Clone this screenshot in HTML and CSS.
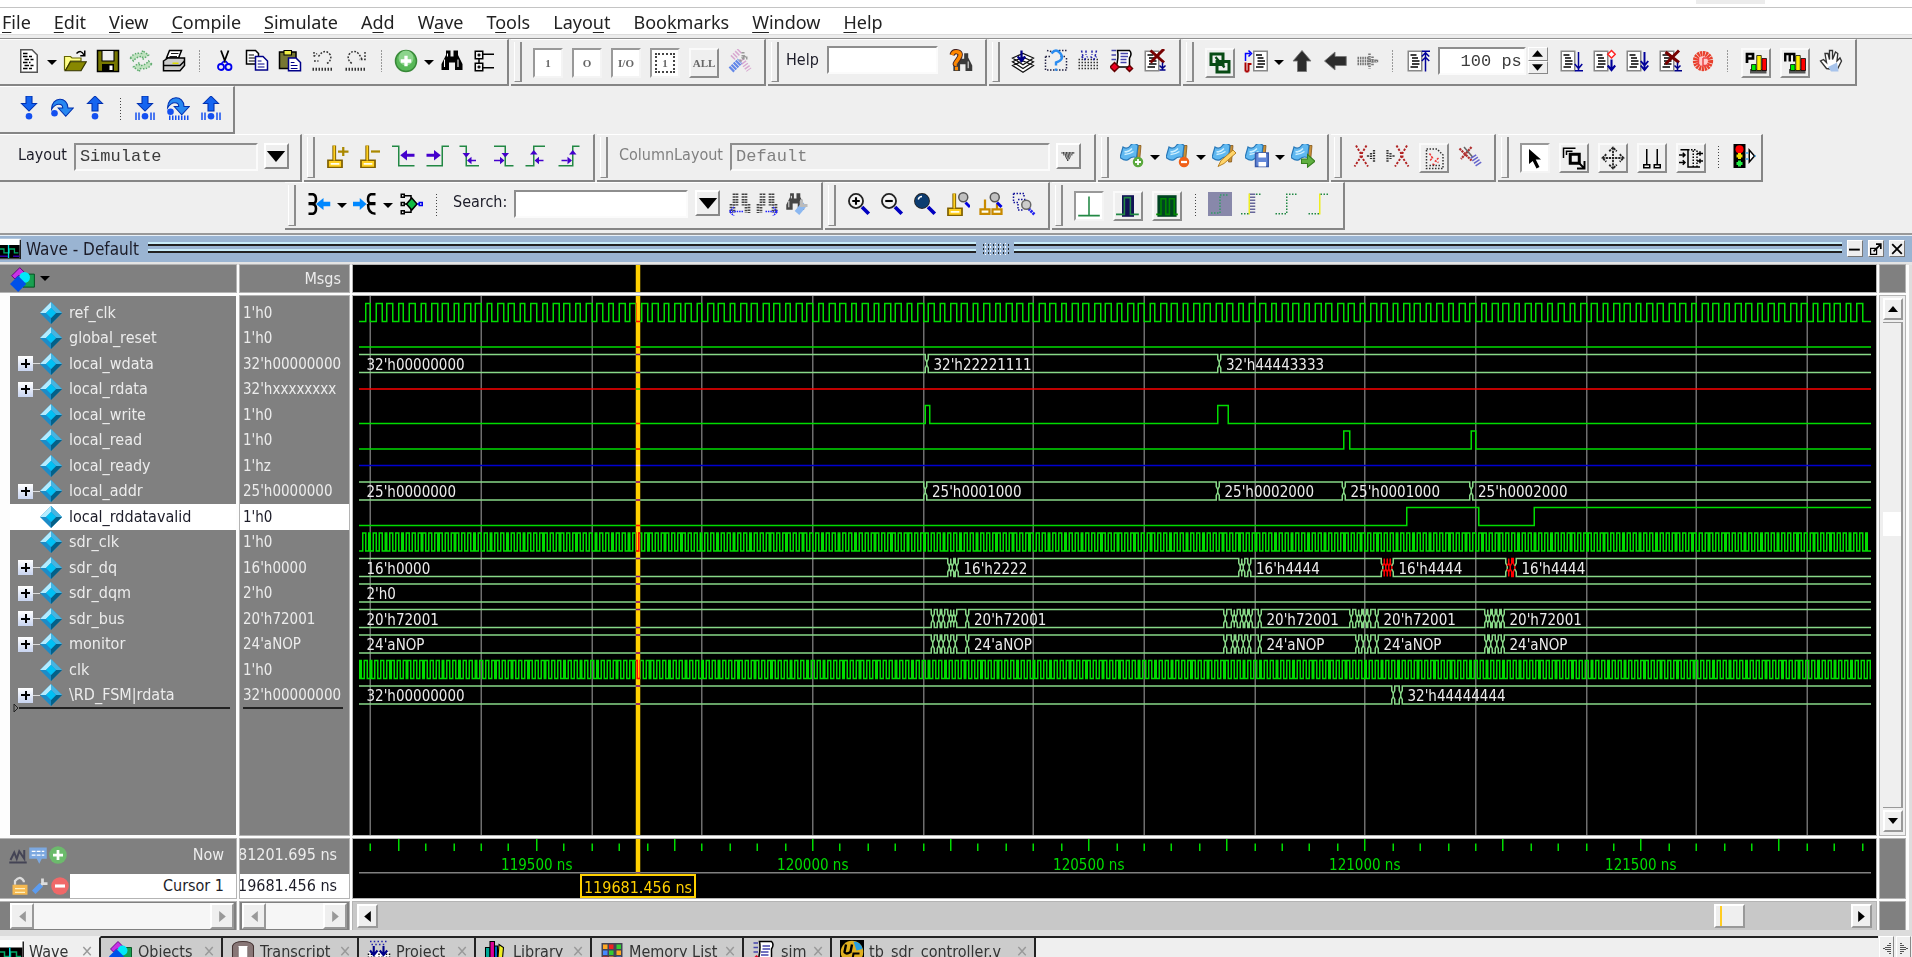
FILE: index.html
```html
<!DOCTYPE html>
<html lang="en">
<head>
<meta charset="utf-8">
<title>Wave - Default</title>
<link rel="stylesheet" href="styles.css">
</head>
<body>
<svg class="sprite" aria-hidden="true">
  <symbol id="gem" viewBox="0 0 22 22"><path d="M11 0 22 11 11 22 0 11Z" fill="#1c8cc8"/><path d="M11 0V6L6 11H0Z" fill="#b4ecff"/><path d="M11 0 22 11H16L11 6Z" fill="#46b4e0"/><path d="M22 11 11 22V16L16 11Z" fill="#046088"/><path d="M11 6 16 11 11 16 6 11Z" fill="#00c0f4"/></symbol>
  <symbol id="objs" viewBox="0 0 16 16"><path d="M1 6 6 1 9 4V6H5L3 8Z" fill="#c832e6" stroke="#600080" stroke-width=".6"/><path d="M8 5H15V13H8Z" fill="#18a050" stroke="#005020" stroke-width=".6"/><circle cx="9" cy="7" r="3.3" fill="#00e8f8"/><path d="M5 6 10 11 5 16 0 11Z" fill="#0050e8"/></symbol>
  <symbol id="wave" viewBox="0 0 16 16"><path d="M0 0H16V16H0Z" fill="#fff"/><path d="M0 5H15V15H0Z"/><path d="M0 8H3V11H7V8H11V11H14" fill="none" stroke="#0a6"/><path d="M0 13.500H6M10 13.500H15" stroke="#30a"/><path d="M6.500 5V15" stroke="#0dd"/><path d="M15.500 1V15.500H0" fill="none" stroke="#222"/></symbol>
  <symbol id="page" viewBox="0 0 16 16"><path d="M1.500 1.500H10.500V14.500H1.500Z" fill="#fff" stroke="#888"/><path d="M3 4H7M4 6H8M4 8H9M4 10H9M3 12H8" stroke="#000"/></symbol>
  <symbol id="flag" viewBox="0 0 16 16"><path d="M12 1H14L13 12H11Z" fill="#c89038" stroke="#805010" stroke-width=".5"/><path d="M2 2Q5 4 7 1T12 1L11 9Q8 8 6 10T0 9Z" fill="#60b8f0" stroke="#2878b8" stroke-width=".8"/><path d="M3 5Q5 6 8 3M3 7Q6 7 9 5" fill="none" stroke="#d0f0ff"/></symbol>
  <symbol id="bino" viewBox="0 0 16 16"><path d="M4 1H7V5H9V1H12V4L15 10V14H10V9H6V14H1V10L4 4Z"/><path d="M3 7V12M12 7V12M5 3V5" stroke="#fff" stroke-width=".7"/></symbol>
  <symbol id="binodim" viewBox="0 0 16 16"><path d="M4 1V14M6 1V9M10 1V9M12 1V14M2 8V14M14 8V14" stroke="#444" stroke-width="1.800" stroke-dasharray="1 .8"/></symbol>
  <symbol id="marker" viewBox="0 0 16 16"><path d="M5.500 1V11M2 11.500H10V15H2Z" stroke="#806000" stroke-width="2.500" fill="none"/><path d="M5.500 1V11M2.500 12H9.500V14.500H2.500Z" stroke="#ffd020" fill="#ffe" stroke-width="1.200"/></symbol>
  <symbol id="lens" viewBox="0 0 16 16"><path d="M10 10 14.500 14.500" stroke="#0000c0" stroke-width="2.500"/><circle cx="6" cy="6" r="4.700" fill="#f4f4f4" stroke="#222" stroke-width="1.200"/></symbol>
  <symbol id="mini" viewBox="0 0 16 16"><path d="M12 7 15 10" stroke="#0000e0" stroke-width="2"/><circle cx="10.500" cy="3.500" r="3" fill="#c0c0c0" stroke="#555"/></symbol>
  <symbol id="bars" viewBox="0 0 16 16"><path d="M4 12H15V15H4Z" fill="#555"/><path d="M5 9H8V13H5Z" fill="#0e0" stroke="#000" stroke-width=".5"/><path d="M8.500 3H11.500V13H8.500Z" fill="#fe0" stroke="#000" stroke-width=".5"/><path d="M12 5H15V13H12Z" fill="#f00" stroke="#000" stroke-width=".5"/></symbol>
  <symbol id="stepdn" viewBox="0 0 16 16"><path d="M6 0H10V5H13L8 10 3 5H6Z" fill="#1464f0" stroke="#0030b0" stroke-width=".7"/></symbol>
  <symbol id="stepup" viewBox="0 0 16 16"><path d="M6 10H10V5H13L8 0 3 5H6Z" fill="#1464f0" stroke="#0030b0" stroke-width=".7"/></symbol>
  <symbol id="stepov" viewBox="0 0 16 16"><path d="M1 8C1-1 12-1 12 7H15.500L10.500 12.500 5.500 7H8.500C8.500 4 4 3 1 8Z" fill="#2888f0" stroke="#0030b0" stroke-width=".7"/><circle cx="3" cy="10.500" r="2.200" fill="#1450f0"/></symbol>
</svg>

<div class="strip"></div>
<nav class="menu" aria-label="Main">
  <button><u>F</u>ile</button><button><u>E</u>dit</button><button><u>V</u>iew</button><button><u>C</u>ompile</button><button><u>S</u>imulate</button><button>A<u>d</u>d</button><button>W<u>a</u>ve</button><button>T<u>o</u>ols</button><button>Layo<u>u</u>t</button><button>Boo<u>k</u>marks</button><button><u>W</u>indow</button><button><u>H</u>elp</button>
</nav>

<div class="row">
  <div class="bar first">
    <button class="tb" aria-label="New"><svg viewBox="0 0 16 16"><path d="M2.500.500H10L13.500 4V15.500H2.500Z" fill="#fff" stroke="#555"/><path d="M4 3H8M4 5H10M5 7H11M4 9H9M5 11H11M4 13H10" stroke="#000" stroke-dasharray="3 1"/></svg></button><button class="caret" aria-label="New options"></button>
    <button class="tb" aria-label="Open"><svg viewBox="0 0 16 16"><path d="M1 5H5L6 6H12V8H5L2 14H1Z" fill="#ff8" stroke="#660" stroke-width=".8"/><path d="M5 8.500H15.500L12 14.500H1.500Z" fill="#880" stroke="#330" stroke-width=".8"/><path d="M9 3Q12 0 14 4M14.500 1V4.500H11.500" fill="none" stroke="#000"/></svg></button>
    <button class="tb" aria-label="Save"><svg viewBox="0 0 16 16"><path d="M1 1H15V15H1Z" fill="#770" stroke="#000"/><path d="M4 1H12V8H4Z" fill="#eee" stroke="#000" stroke-width=".7"/><path d="M4 10H12V15H4Z"/><path d="M9 11H11V14H9Z" fill="#fff"/></svg></button>
    <button class="tb" aria-label="Reload"><svg viewBox="0 0 16 16" class="dis"><path d="M1 6Q3 2 9 3V1L13 4 9 7V5Q5 5 3 8ZM15 10Q13 14 7 13V15L3 12 7 9V11Q11 11 13 8Z" fill="#b4e0b4" stroke="#3c9a50" stroke-dasharray="1 1"/></svg></button>
    <button class="tb" aria-label="Print"><svg viewBox="0 0 16 16"><path d="M5 1H13L11 6H3Z" fill="#fff" stroke="#000"/><path d="M6 3H11M5 5H10" stroke="#000" stroke-width=".6"/><path d="M1 8 4 6H15V11L12 14.500H1Z" fill="#ccc" stroke="#000"/><path d="M1 11H12L15 8" fill="none" stroke="#000"/><path d="M7 9.500H11" stroke="#dd0"/></svg></button>
    <span class="sep"></span>
    <button class="tb" aria-label="Cut"><svg viewBox="0 0 16 16"><path d="M6 1 9 9M11 1 8 9" stroke="#000" stroke-width="1.200"/><circle cx="6" cy="12" r="2" fill="none" stroke="#00e" stroke-width="1.200"/><circle cx="11" cy="12" r="2" fill="none" stroke="#00e" stroke-width="1.200"/><path d="M8 8 6 10M9 8 11 10" stroke="#00e"/></svg></button>
    <button class="tb" aria-label="Copy"><svg viewBox="0 0 16 16"><path d="M1 1H7L9 3V10H1Z" fill="#fff" stroke="#000"/><path d="M2.500 4H6M2.500 6H7M2.500 8H7" stroke="#000" stroke-width=".8"/><path d="M7 5H12L15 8V14H7Z" fill="#fff" stroke="#008"/><path d="M8.500 8H11M8.500 10H13M8.500 12H13" stroke="#008" stroke-width=".8"/></svg></button>
    <button class="tb" aria-label="Paste"><svg viewBox="0 0 16 16"><path d="M1 2H12V13H1Z" fill="#773" stroke="#000"/><path d="M4 1H9V4H4Z" fill="#ee4" stroke="#000" stroke-width=".7"/><path d="M7 6H12L15 9V14.500H7Z" fill="#fff" stroke="#008"/><path d="M8.500 9H11M8.500 11H13M8.500 13H13" stroke="#008" stroke-width=".8"/></svg></button>
    <button class="tb" aria-label="Undo" disabled><svg viewBox="0 0 16 16"><path d="M2 5 4 3M2 8H5M5 5Q9-1 13 4Q14 8 10 10M2 2V5" fill="none" stroke="#333" stroke-dasharray="1.200 1"/><path d="M1 13.500H15" stroke="#333" stroke-width="2" stroke-dasharray="1 1"/></svg></button>
    <button class="tb" aria-label="Redo" disabled><svg viewBox="0 0 16 16"><path d="M14 2V7H10M12 7Q8-2 3 4Q2 8 6 10" fill="none" stroke="#333" stroke-dasharray="1.200 1"/><path d="M1 13.500H15" stroke="#333" stroke-width="2" stroke-dasharray="1 1"/></svg></button>
    <span class="sep"></span>
    <button class="tb" aria-label="Add"><svg viewBox="0 0 16 16"><circle cx="8" cy="8" r="7" fill="#58b858" stroke="#388838"/><circle cx="8" cy="6" r="5" fill="#8cd48c"/><path d="M8 4.500V11.500M4.500 8H11.500" stroke="#fff" stroke-width="2.200"/></svg></button><button class="caret" aria-label="Add options"></button>
    <button class="tb" aria-label="Find"><svg viewBox="0 0 16 16"><use href="#bino"/></svg></button>
    <button class="tb" aria-label="Expand tree"><svg viewBox="0 0 16 16" fill="none" stroke="#000"><path d="M1.500 1.500H6.500V6.500H1.500ZM1.500 9.500H6.500V14.500H1.500ZM6 3.500H14M6 12.500H14M4 7V9M3 4H5M4 3V5M3 12H5M4 11V13"/></svg></button>
  </div>
  <div class="bar">
    <button class="box on" disabled>1</button><button class="box on" disabled>O</button><button class="box on" disabled>I/O</button><button class="box on" disabled><span class="dot">1</span></button><button class="box" disabled>ALL</button>
    <button class="tb" aria-label="Filter tool"><svg viewBox="0 0 16 16"><path d="M3 6 8 1M9 7 14 14" stroke="#d8a8d0" stroke-width="4" stroke-dasharray="1 1"/><path d="M2 14 8 8" stroke="#6488e8" stroke-width="4.500" stroke-dasharray="1.500 .5"/><path d="M8 8 12 4M10 2V6H14" fill="none" stroke="#999" stroke-width="2" stroke-dasharray="1 1"/></svg></button>
  </div>
  <div class="bar">
    <label class="lbl" for="help">Help</label><input id="help" class="field help">
    <button class="tb" aria-label="Search help"><svg viewBox="0 0 16 16"><use href="#bino" transform="translate(2 2) scale(.9)" opacity=".75"/><path d="M2 4Q3 1 6 2T6 7 5 10" fill="none" stroke="#422" stroke-width="3.500"/><path d="M2 4Q3 1 6 2T6 7 5 10M4 13H6" fill="none" stroke="#f80" stroke-width="2.300"/></svg></button>
  </div>
  <div class="bar">
    <button class="tb" aria-label="Compile"><svg viewBox="0 0 16 16"><path d="M1 11 8 8 15 11 8 15.500Z M1 8.500 8 5.500 15 8.500 8 13Z M1 6 8 3 15 6 8 10.500Z" fill="#fff" stroke="#111" stroke-width=".8"/><path d="M7 1V7M4.500 5 7 8 9.500 5" fill="none" stroke="#008" stroke-width="1.500"/></svg></button>
    <button class="tb" aria-label="Compile out of date" disabled><svg viewBox="0 0 16 16" fill="none"><path d="M1 5V14H15V5M2 1 6 2M10 1H15M1 5H5M11 5H15" stroke="#224" stroke-dasharray="1 1"/><path d="M5 3Q8-1 11 3T8 9V11M8 13V14.500" stroke="#2a8cf0" stroke-width="1.600"/></svg></button>
    <button class="tb" aria-label="Compile all" disabled><svg viewBox="0 0 16 16"><path d="M1 9H15M1 11H15M1 13H15M1 7H15" stroke="#333" stroke-dasharray="1 1"/><path d="M3 1 4 5M6 1V4M10 1V4M13 1 12 5M3 5 5 7 7 5M9 5 11 7 13 5" fill="none" stroke="#22a" stroke-dasharray="1.500 1"/></svg></button>
    <button class="tb" aria-label="Simulate"><svg viewBox="0 0 16 16"><path d="M5 1H13Q15 3 13 6V12H4Q6 6 5 1Z" fill="#fff" stroke="#000"/><path d="M7 3H12M7 5H12M7 7H11M7 9H11M1 1H4M1 4H4M1 7H4" stroke="#44a"/><path d="M3 9 6 12 3 15 0 12ZM13 11 15 13 13 15 11 13Z" fill="#e02" stroke="#600"/></svg></button>
    <button class="tb" aria-label="Break"><svg viewBox="0 0 16 16"><use href="#page"/><path d="M5 1 14 9M14 0 5 9" stroke="#700" stroke-width="2"/><path d="M13 9V14M11 14H15M11 11 13 13 15 11" fill="none" stroke="#008"/></svg></button>
  </div>
  <div class="bar">
    <button class="box" aria-label="Environment"><svg viewBox="0 0 16 16"><path d="M2 2H10V9H2ZM6 7H14V14H6Z" fill="none" stroke="#074a14" stroke-width="2"/><path d="M5 4 11 11" stroke="#074a14" stroke-width="1.500"/></svg></button>
    <button class="tb" aria-label="Restart options"><svg viewBox="0 0 16 16"><use href="#page" x="5"/><path d="M1 8V3H4M3 1 5 3 3 5" fill="none" stroke="#00f"/><path d="M1 15V9M1 15H3M3 15V10H5" fill="none" stroke="#a00" stroke-width="1.300"/></svg></button><button class="caret" aria-label="More"></button>
    <button class="tb" aria-label="Up"><svg viewBox="0 0 16 16"><path d="M8 1 14 8H11V15H5V8H2Z" fill="#2c2c2c" stroke="#777" stroke-width=".6"/></svg></button>
    <button class="tb" aria-label="Back"><svg viewBox="0 0 16 16"><path d="M1 8 8 2V5H15.500V11H8V14Z" fill="#2c2c2c" stroke="#777" stroke-width=".6"/></svg></button>
    <button class="tb" aria-label="Forward" disabled><svg viewBox="0 0 16 16"><path d="M1 6H9M1 8H15M1 10H9M9 3V13M11 5V11M13 7V9" stroke="#777" stroke-width="1.700" stroke-dasharray="1 .6"/></svg></button>
    <span class="sep"></span>
    <button class="tb" aria-label="Restart"><svg viewBox="0 0 16 16"><use href="#page"/><path d="M13 15V2M10.500 1.500H16M10.500 5 13 2.500 15.500 5M10.500 8 13 5.500 15.500 8" fill="none" stroke="#009"/></svg></button>
    <input class="field run" aria-label="Run length" value="100 ps"><span class="spin"><button aria-label="Increase"><svg viewBox="0 0 10 6"><path d="M5 0 10 6H0Z"/></svg></button><button aria-label="Decrease"><svg viewBox="0 0 10 6"><path d="M5 6 10 0H0Z"/></svg></button></span>
    <button class="tb" aria-label="Run"><svg viewBox="0 0 16 16"><use href="#page"/><path d="M13 2V14M10.500 14.500H16M10.500 10 13 13 15.500 10" fill="none" stroke="#009"/></svg></button>
    <button class="tb" aria-label="Continue run"><svg viewBox="0 0 16 16"><use href="#page"/><path d="M13 7V14M10.500 11 13 14 15.500 11" fill="none" stroke="#009" stroke-width="1.400"/><path d="M13 1 15.500 3.500 13 6 10.500 3.500Z" fill="#fff" stroke="#f22"/></svg></button>
    <button class="tb" aria-label="Run all"><svg viewBox="0 0 16 16"><use href="#page"/><path d="M13 2V14M10.500 8 13 11 15.500 8M10.500 11 13 14 15.500 11" fill="none" stroke="#009" stroke-width="1.300"/></svg></button>
    <button class="tb" aria-label="Stop simulation"><svg viewBox="0 0 16 16"><use href="#page"/><path d="M5 2 14 9M14 1 5 10" stroke="#700" stroke-width="2"/><path d="M13 9V14M11 14.500H16M11 11 13 13 15 11" fill="none" stroke="#008"/></svg></button>
    <button class="tb" aria-label="Stop" disabled><svg viewBox="0 0 16 16"><circle cx="8" cy="8" r="5" fill="#fcc" stroke="#e8402c" stroke-width="3.500" stroke-dasharray="1.400 .4"/><path d="M5 6V11M8 6H12M8 6V11H12" stroke="#e44" fill="none"/></svg></button>
    <span class="sep"></span>
    <button class="box" aria-label="Performance profiling"><svg viewBox="0 0 16 16"><use href="#bars"/><path d="M2 8V2H6V5H2" fill="none" stroke="#000" stroke-width="1.800"/></svg></button>
    <button class="box" aria-label="Memory profiling"><svg viewBox="0 0 16 16"><use href="#bars"/><path d="M1.500 7V2H7.500V7M4.500 2V7" fill="none" stroke="#000" stroke-width="1.600"/></svg></button>
    <button class="tb" aria-label="Edit breakpoints"><svg viewBox="0 0 16 16"><path d="M5 13 1 8 3 7 5 9 4 3 6 3 7 7V1H9V7L11 2 12.500 3 12 8 14 6 15 8 12 14Z" fill="#fff" stroke="#333" stroke-width=".9"/><path d="M6 12 12 9 13 15H8Z" fill="#a8c4ec"/></svg></button>
  </div>
</div>

<div class="row">
  <div class="bar first">
    <button class="tb" aria-label="Step into"><svg viewBox="0 0 16 16"><use href="#stepdn"/><circle cx="8" cy="13.500" r="2.200" fill="#1450f0"/></svg></button>
    <button class="tb" aria-label="Step over"><svg viewBox="0 0 16 16"><use href="#stepov" y="1"/></svg></button>
    <button class="tb" aria-label="Step out"><svg viewBox="0 0 16 16"><use href="#stepup"/><circle cx="8" cy="13.500" r="2.200" fill="#1450f0"/></svg></button>
    <span class="sep"></span>
    <button class="tb" aria-label="Step into current"><svg viewBox="0 0 16 16"><use href="#stepdn"/><path d="M2 11V16M4 11V16M12 11V16M14 11V16" stroke="#1450f0"/><circle cx="8" cy="13.500" r="2.200" fill="#1450f0"/></svg></button>
    <button class="tb" aria-label="Step over current"><svg viewBox="0 0 16 16"><use href="#stepov"/><path d="M2 14.500H16" stroke="#1450f0" stroke-width="3" stroke-dasharray="1 1"/></svg></button>
    <button class="tb" aria-label="Step out current"><svg viewBox="0 0 16 16"><use href="#stepup"/><path d="M2 11V16M4 11V16M12 11V16M14 11V16" stroke="#1450f0"/><circle cx="8" cy="13.500" r="2.200" fill="#1450f0"/></svg></button>
  </div>
</div>

<div class="row">
  <div class="bar first combo-bar">
    <label class="lbl" for="layout">Layout</label><select id="layout" class="field layout"><option>Simulate</option></select><span class="drop"><svg viewBox="0 0 20 12"><path d="M0 0H20L10 12Z"/></svg></span>
  </div>
  <div class="bar">
    <button class="tb" aria-label="Insert cursor"><svg viewBox="0 0 16 16"><use href="#marker"/><path d="M8 5H15M11.500 2V8" stroke="#a80" stroke-width="1.500"/></svg></button>
    <button class="tb" aria-label="Delete cursor"><svg viewBox="0 0 16 16"><use href="#marker"/><path d="M8 5H14" stroke="#a80" stroke-width="1.500"/></svg></button>
    <button class="tb" aria-label="Previous transition"><svg viewBox="0 0 16 16" fill="none"><path d="M0 1.500H4.500V14.500H15" stroke="#284"/><path d="M8 7.500H15" stroke="#40c" stroke-width="2"/><path d="M5.500 7.500 10 4V11Z" fill="#40c"/></svg></button>
    <button class="tb" aria-label="Next transition"><svg viewBox="0 0 16 16" fill="none"><path d="M1 14.500H11.500V1.500H16" stroke="#284"/><path d="M1 7.500H8" stroke="#40c" stroke-width="2"/><path d="M10.500 7.500 6 4V11Z" fill="#40c"/></svg></button>
    <button class="tb" aria-label="Previous falling edge"><svg viewBox="0 0 16 16" fill="none"><path d="M1 1.500H5.500V14.500H14" stroke="#284"/><path d="M3 6H8L5.500 9ZM6 11 9 8.500V13.500Z" fill="#40c"/><path d="M8 11H12" stroke="#40c"/></svg></button>
    <button class="tb" aria-label="Next falling edge"><svg viewBox="0 0 16 16" fill="none"><path d="M2 1.500H9.500V14.500H15" stroke="#284"/><path d="M7 6H12L9.500 9ZM9 11 6 8.500V13.500Z" fill="#40c"/><path d="M2 11H6" stroke="#40c"/></svg></button>
    <button class="tb" aria-label="Previous rising edge"><svg viewBox="0 0 16 16" fill="none"><path d="M1 14.500H6.500V1.500H14" stroke="#284"/><path d="M4 7H9L6.500 4ZM7 11 10 8.500V13.500Z" fill="#40c"/><path d="M9 11H13" stroke="#40c"/></svg></button>
    <button class="tb" aria-label="Next rising edge"><svg viewBox="0 0 16 16" fill="none"><path d="M1 14.500H10.500V1.500H15" stroke="#284"/><path d="M8 7H13L10.500 4ZM10 11 7 8.500V13.500Z" fill="#40c"/><path d="M3 11H7" stroke="#40c"/></svg></button>
  </div>
  <div class="bar combo-bar off">
    <label class="lbl" for="cols">ColumnLayout</label><select id="cols" class="field cols" disabled><option>Default</option></select><span class="drop"><svg viewBox="0 0 20 12"><path d="M3 2H17M5 4H15M7 6H13M8 8H12M9 10H11" stroke="#333" stroke-width="2" stroke-dasharray="1 .6"/></svg></span>
  </div>
  <div class="bar">
    <button class="tb" aria-label="Add bookmark"><svg viewBox="0 0 16 16"><use href="#flag"/><circle cx="12" cy="12" r="3.500" fill="#5aa83c"/><path d="M12 10V14M10 12H14" stroke="#fff" stroke-width="1.200"/></svg></button><button class="caret" aria-label="Add bookmark options"></button>
    <button class="tb" aria-label="Delete bookmark"><svg viewBox="0 0 16 16"><use href="#flag"/><circle cx="12" cy="12" r="3.500" fill="#f06018"/><path d="M10 12H14" stroke="#fff" stroke-width="1.500"/></svg></button><button class="caret" aria-label="Delete bookmark options"></button>
    <button class="tb" aria-label="Edit bookmarks"><svg viewBox="0 0 16 16"><use href="#flag"/><path d="M4 15 6 11 14 4 16 6 8 13Z" fill="#ffd468" stroke="#b07818" stroke-width=".6"/></svg></button>
    <button class="tb" aria-label="Save bookmarks"><svg viewBox="0 0 16 16"><use href="#flag"/><path d="M7 6H15.500V15H7Z" fill="#6488d8" stroke="#3858a8"/><path d="M9 6H14V9H9ZM9 12H14V15H9Z" fill="#fff"/></svg></button><button class="caret" aria-label="Save bookmark options"></button>
    <button class="tb" aria-label="Go to bookmark"><svg viewBox="0 0 16 16"><use href="#flag"/><path d="M7 10H11V7L16 11.500 11 15.500V13H7Z" fill="#60b040" stroke="#388020" stroke-width=".7"/></svg></button>
  </div>
  <div class="bar">
    <button class="tb" aria-label="Previous difference" disabled><svg viewBox="0 0 16 16"><path d="M2 1 5 6V9L1 15M9 1 6 6V9L10 15" fill="none" stroke="#b02020" stroke-width="1.300" stroke-dasharray="1.500 1"/><path d="M14 4V12M12 6V10M10 7.500V8.500" stroke="#333" stroke-width="1.500" stroke-dasharray="1 .7"/></svg></button>
    <button class="tb" aria-label="Next difference" disabled><svg viewBox="0 0 16 16"><path d="M7 1 10 6V9L6 15M14 1 11 6V9L15 15" fill="none" stroke="#b02020" stroke-width="1.300" stroke-dasharray="1.500 1"/><path d="M1 4V12M3 6V10M5 7.500V8.500" stroke="#333" stroke-width="1.500" stroke-dasharray="1 .7"/></svg></button>
    <button class="box" aria-label="Compare report" disabled><svg viewBox="0 0 16 16" fill="none"><path d="M3 2H10L14 6V15H3Z" stroke="#333" stroke-dasharray="1 1"/><path d="M5 5 7 8 5 10M11 8 9 10 11 11M7 12 9 13" stroke="#e33" stroke-dasharray="1.500 .7"/><path d="M5 13H12" stroke="#333" stroke-dasharray="1 1"/></svg></button>
    <button class="tb" aria-label="Clear compare" disabled><svg viewBox="0 0 16 16"><path d="M1 3 9 11M9 2 2 10" stroke="#b03030" stroke-width="1.500" stroke-dasharray="1.500 .5"/><path d="M4 2 10 9" stroke="#666"/><path d="M10 8 14 14" stroke="#66c" stroke-width="4.500" stroke-dasharray="1 1"/></svg></button>
  </div>
  <div class="bar tools">
    <button class="box on" aria-label="Select mode"><svg viewBox="0 0 16 16"><path d="M4 2V12L6.500 10 9 15 11 14 8.500 9H12Z"/></svg></button>
    <button class="box" aria-label="Zoom mode"><svg viewBox="0 0 16 16" fill="none" stroke="#000"><path d="M1 8V1.500H9M3 6V3.500H7"/><path d="M5.500 5.500H11.500V11.500H5.500Z" stroke-width="2"/><path d="M11 11 14.500 14.500M15 10V15H10" stroke-width="1.300"/></svg></button>
    <button class="box" aria-label="Pan mode"><svg viewBox="0 0 16 16" fill="none" stroke="#222" stroke-width="1.200"><path d="M8 1V15M1 8H15M5.500 3.500 8 1 10.500 3.500M5.500 12.500 8 15 10.500 12.500M3.500 5.500 1 8 3.500 10.500M12.500 5.500 15 8 12.500 10.500" stroke-dasharray="1.500 .6"/></svg></button>
    <button class="box" aria-label="Two cursor mode"><svg viewBox="0 0 16 16" fill="none" stroke="#000"><path d="M4.500 2V12M11.500 2V12M2.500 12.500H6.500V14.500H2.500ZM9.500 12.500H13.500V14.500H9.500Z"/></svg></button>
    <button class="box" aria-label="Edit mode"><svg viewBox="0 0 16 16" fill="none" stroke="#000"><path d="M1 2.500H6V14H14"/><path d="M6 2.500H12M9.500 3V14M12 3V14" stroke-dasharray="1 1"/><path d="M0 6H4M0 11H4M2.500 4.500 4 6 2.500 7.500M2.500 9.500 4 11 2.500 12.500M12 5H16M12 10H16M14 3.500V6.500M14 8.500V11.500"/></svg></button>
    <span class="sep"></span>
    <button class="tb" aria-label="Stop drawing"><svg viewBox="0 0 16 16"><path d="M1 0H9V16H1Z"/><circle cx="5" cy="3.500" r="2.700" fill="#f00"/><path d="M5 6V10M3 8H7" stroke="#ed0" stroke-width="2"/><path d="M5 11V15M3 13H7" stroke="#2e4" stroke-width="2"/><path d="M11.500 4V12L15 8Z" fill="#fff" stroke="#000"/><path d="M9 6H11M9 10H11M15 8H16" stroke="#4ae"/></svg></button>
  </div>
</div>

<div class="row last">
  <div class="bar">
    <button class="tb" aria-label="Expanded time off"><svg viewBox="0 0 16 16" fill="none"><path d="M1 1.500H4Q6 2 6 5T3 7.500H1M1 8H3Q6 8 6 11T4 14.500H1" stroke="#000" stroke-width="1.700"/><path d="M6 8 11 4V6.500H15.500V9.500H11V12Z" fill="#08f"/></svg></button><button class="caret" aria-label="More"></button>
    <button class="tb" aria-label="Trace drivers"><svg viewBox="0 0 16 16" fill="none"><path d="M15 1.500H12Q10 2 10 5T13 7.500H15M10 8H15M10 8Q10 14.500 15 14.500" stroke="#000" stroke-width="1.700"/><path d="M9 8 4.500 4V6.500H0V9.500H4.500V12Z" fill="#08f"/></svg></button><button class="caret" aria-label="More"></button>
    <button class="tb" aria-label="Trace net"><svg viewBox="0 0 16 16" fill="none" stroke="#000"><path d="M1.500 1.500H3.500V3.500H1.500ZM1.500 7H3.500V9H1.500ZM1.500 12.500H3.500V14.500H1.500ZM4 2.500H8V5M4 8H6M4 13.500H8V11"/><path d="M8.500 4 12 8 8.500 12 5 8Z" fill="#1b4"/><path d="M12 8H14M13.500 7H15.500V9H13.500Z" stroke="#00e"/></svg></button>
    <span class="sep"></span>
    <label class="lbl search-lbl" for="search">Search:</label><input id="search" class="field search"><button class="drop" aria-label="Search history"><svg viewBox="0 0 20 12"><path d="M0 0H20L10 12Z"/></svg></button>
    <span class="pair"><button class="tb" aria-label="Search back" disabled><svg viewBox="0 0 16 16"><use href="#binodim"/><path d="M1 13H10M4 10 1 13 4 16" fill="none" stroke="#22f" stroke-dasharray="1 .6"/></svg></button><button class="tb" aria-label="Search forward" disabled><svg viewBox="0 0 16 16"><use href="#binodim"/><path d="M7 13H15M12 10 15 13 12 16" fill="none" stroke="#22f" stroke-dasharray="1 .6"/></svg></button></span>
    <button class="tb" aria-label="Search options"><svg viewBox="0 0 16 16"><use href="#bino" opacity=".7" transform="scale(.85)"/><path d="M8 14 13 8" stroke="#8cb8f0" stroke-width="4"/><path d="M11 5V9H15" fill="none" stroke="#bbb" stroke-width="2"/></svg></button>
  </div>
  <div class="bar">
    <button class="tb" aria-label="Zoom in"><svg viewBox="0 0 16 16"><use href="#lens"/><path d="M6 3.500V8.500M3.500 6H8.500" stroke="#000" stroke-width="1.400"/></svg></button>
    <button class="tb" aria-label="Zoom out"><svg viewBox="0 0 16 16"><use href="#lens"/><path d="M3.500 6H8.500" stroke="#000" stroke-width="1.400"/></svg></button>
    <button class="tb" aria-label="Zoom full"><svg viewBox="0 0 16 16"><use href="#lens"/><circle cx="6" cy="6" r="4.700" fill="#0c3c70"/><path d="M3.500 5Q4 3 6 3" stroke="#fff" fill="none"/></svg></button>
    <button class="tb" aria-label="Zoom on cursor"><svg viewBox="0 0 16 16"><use href="#marker"/><use href="#mini" x="1"/></svg></button>
    <button class="tb" aria-label="Zoom between cursors"><svg viewBox="0 0 16 16"><path d="M4 5V11M1 11.500H7V14.500H1ZM12 8V11M9 11.500H15V14.500H9Z" fill="#ffe" stroke="#c88a00" stroke-width="1.500"/><use href="#mini"/></svg></button>
    <button class="tb" aria-label="Zoom other"><svg viewBox="0 0 16 16"><path d="M1 1H8V4M1 1V7H4V12H8M4 5H10" fill="none" stroke="#119" stroke-dasharray="1 1"/><path d="M11 11 15 15" stroke="#22e" stroke-width="2" stroke-dasharray="1.500 .5"/><circle cx="9.500" cy="8.500" r="3" fill="#ccc" stroke="#666"/></svg></button>
  </div>
  <div class="bar">
    <button class="box on" aria-label="Expanded off"><svg viewBox="0 0 20 20"><path d="M1 18H19M10 2V18" stroke="#284" stroke-width="1.300"/></svg></button><button class="box" aria-label="Deltas"><svg viewBox="0 0 20 20"><path d="M5 1H15V19H5Z" fill="#115"/><path d="M0 17H7V3H12V17H19" fill="none" stroke="#284" stroke-width="1.300"/></svg></button><button class="box" aria-label="Events"><svg viewBox="0 0 20 20"><path d="M2 1H18V19H2Z" fill="#042"/><path d="M1 17H5V4H9V17H12V4H16V17H19" fill="none" stroke="#080" stroke-width="1.300"/></svg></button>
    <span class="sep"></span>
    <button class="tb" aria-label="Expand all" disabled><svg viewBox="0 0 16 16"><path d="M0 0H16V16H0Z" fill="#88a"/><path d="M2 14H8V2H14" fill="none" stroke="#396" stroke-dasharray="1 1"/></svg></button>
    <button class="tb" aria-label="Expand at cursor" disabled><svg viewBox="0 0 16 16" fill="none"><path d="M7.500 1V15" stroke="#669" stroke-width="4" stroke-dasharray="1 1"/><path d="M5.500 1V15" stroke="#ee2"/><path d="M0 14.500H5M10 1.500H14" stroke="#284" stroke-dasharray="1 1"/></svg></button>
    <button class="tb" aria-label="Collapse all" disabled><svg viewBox="0 0 16 16" fill="none"><path d="M1 14.500H8.500V1.500H15" stroke="#284" stroke-dasharray="1 1"/></svg></button>
    <button class="tb" aria-label="Collapse at cursor" disabled><svg viewBox="0 0 16 16" fill="none"><path d="M8.500 1V15" stroke="#ee2"/><path d="M1 14.500H8M9 1.500H15" stroke="#284" stroke-dasharray="1 1"/></svg></button>
  </div>
</div>

<header class="title">
  <svg class="ticon" viewBox="0 0 16 16"><use href="#wave"/></svg>
  <h1>Wave - Default</h1>
  <span class="rails"></span><span class="grip"></span><span class="rails"></span>
  <button aria-label="Minimize"><svg viewBox="0 0 10 10"><path d="M0 5.500H9" stroke="#000" stroke-width="1.600"/></svg></button>
  <button aria-label="Undock"><svg viewBox="0 0 10 10" fill="none" stroke="#000"><path d="M.500 4.500H5.500V9.500H.500Z"/><path d="M3 7 8.500 1.500M5 1H9V5" stroke-width="1.400"/></svg></button>
  <button aria-label="Close"><svg viewBox="0 0 10 10"><path d="M1 1 9 9M9 1 1 9" stroke="#000" stroke-width="1.500"/></svg></button>
</header>

<main class="wave">
  <div class="gray head"><svg viewBox="0 0 16 16"><use href="#objs"/></svg><button class="caret" aria-label="Object filter"></button></div>
  <div class="gray head msgs">Msgs</div>
  <div class="black"><svg class="plot" id="top"></svg></div>
  <div class="gray"></div>

  <div class="names">
    <ul class="signals" id="names"></ul>
    <div class="end"><svg viewBox="0 0 6 10"><path d="M1 1 5 5 1 9Z" fill="none" stroke="#222"/></svg><hr></div>
  </div>
  <div class="gray values">
    <ul class="signals" id="values"></ul>
    <div class="end"><hr></div>
  </div>
  <div class="black"><svg class="plot" id="plot"></svg></div>
  <div class="vscroll"><button aria-label="Scroll up"><svg viewBox="0 0 10 6"><path d="M5 0 10 6H0Z"/></svg></button><span class="vtrack"><i></i></span><button aria-label="Scroll down"><svg viewBox="0 0 10 6"><path d="M5 6 10 0H0Z"/></svg></button></div>

  <div class="gray foot">
    <div class="now"><svg viewBox="0 0 16 16"><path d="M1 14H15M2 12 5 6 7 11 9 5 13 11V4" fill="none" stroke="#445" stroke-width="1.600"/></svg><svg viewBox="0 0 16 16"><path d="M1 2H15V11H11L9 15 7 11H1Z" fill="#7ca8e0"/><path d="M3 5H13M3 8H13" stroke="#fff" stroke-dasharray="3 1"/></svg><svg viewBox="0 0 16 16"><circle cx="8" cy="8" r="7" fill="#6cba6c"/><path d="M8 4V12M4 8H12" stroke="#fff" stroke-width="2.200"/></svg><span>Now</span></div>
    <div class="cur"><svg viewBox="0 0 16 16"><path d="M4 7V4Q8-1 11 4V5" fill="none" stroke="#ddd" stroke-width="1.800"/><path d="M2 7H14V15H2Z" fill="#f4b850"/><path d="M4 10H12M4 13H12" stroke="#fff0c0"/></svg><svg viewBox="0 0 16 16"><path d="M3 13 9 7" stroke="#5c9cf0" stroke-width="4"/><path d="M9 7 11 5M10 2V6H14" fill="none" stroke="#ddd" stroke-width="2.200"/></svg><svg viewBox="0 0 16 16"><circle cx="8" cy="8" r="7" fill="#f06868"/><path d="M4 8H12" stroke="#fff" stroke-width="2.500"/></svg><span>Cursor 1</span></div>
  </div>
  <div class="gray foot times"><div class="now"><span>81201.695 ns</span></div><div class="cur"><span>119681.456 ns</span></div></div>
  <div class="black"><svg class="plot" id="ruler"></svg></div>
  <div class="gray"></div>

  <div class="gray hs inset"><button aria-label="Scroll names left" disabled><svg viewBox="0 0 6 10"><path d="M6 0V10L0 5Z"/></svg></button><i></i><button aria-label="Scroll names right" disabled><svg viewBox="0 0 6 10"><path d="M0 0V10L6 5Z"/></svg></button></div>
  <div class="gray hs"><button aria-label="Scroll values left" disabled><svg viewBox="0 0 6 10"><path d="M6 0V10L0 5Z"/></svg></button><i></i><button aria-label="Scroll values right" disabled><svg viewBox="0 0 6 10"><path d="M0 0V10L6 5Z"/></svg></button></div>
  <div class="hs big"><button aria-label="Scroll waves left"><svg viewBox="0 0 6 10"><path d="M6 0V10L0 5Z"/></svg></button><i><b></b></i><button aria-label="Scroll waves right"><svg viewBox="0 0 6 10"><path d="M0 0V10L6 5Z"/></svg></button></div>
  <div class="gray"></div>
</main>

<div class="tabs">
  <div class="tab w100 active"><svg viewBox="0 0 16 16"><use href="#wave"/></svg><button>Wave</button><button class="x" aria-label="Close Wave">✕</button></div>
  <div class="tab w122"><svg viewBox="0 0 16 16"><use href="#objs"/></svg><button>Objects</button><button class="x" aria-label="Close Objects">✕</button></div>
  <div class="tab w136"><svg viewBox="0 0 16 16"><path d="M1 14V4Q2 1 8 1T15 4V14H11V5H5V14Z" fill="#877" stroke="#433" stroke-width=".7"/><path d="M5 4H11V12H5Z" fill="#fff"/></svg><button>Transcript</button><button class="x" aria-label="Close Transcript">✕</button></div>
  <div class="tab w117"><svg viewBox="0 0 16 16"><path d="M1 8H15V16H1Z" fill="#fff"/><path d="M1 9V16M3 9V16M5 11V16M8 9V16M10 11V16M13 9V16M15 9V16" stroke="#000" stroke-dasharray="1 1"/><path d="M2 1H14M3 3H13" stroke="#22a" stroke-dasharray="1 1.500"/><path d="M4.500 4V10M2 7 4.500 10 7 7M11 4V10M8.500 7 11 10 13.500 7" stroke="#008" fill="none" stroke-width="1.400"/></svg><button>Project</button><button class="x" aria-label="Close Project">✕</button></div>
  <div class="tab w116"><svg viewBox="0 0 16 16" stroke="#000" stroke-width=".7"><path d="M1 5H4V16H1Z" fill="#0a9"/><path d="M4 1H7V16H4Z" fill="#d09"/><path d="M7 4H9V16H7Z" fill="#06c"/><path d="M10 3 13 5 12 16H9Z" fill="#ee2"/></svg><button>Library</button><button class="x" aria-label="Close Library">✕</button></div>
  <div class="tab w152"><svg viewBox="0 0 16 16"><path d="M1 2H15V16H1Z" fill="#445"/><path d="M2 3H5V6H2ZM11 7H14V10H11ZM6 11H9V14H6Z" fill="#fa2"/><path d="M6 3H9V6H6ZM2 11H5V14H2Z" fill="#e22"/><path d="M11 3H14V6H11ZM6 7H9V10H6Z" fill="#3c3"/><path d="M2 7H5V10H2ZM11 11H14V14H11Z" fill="#48f"/></svg><button>Memory List</button><button class="x" aria-label="Close Memory List">✕</button></div>
  <div class="tab w88"><svg viewBox="0 0 16 16"><path d="M5 1H13Q15 3 13 6V14H4Q6 6 5 1Z" fill="#fff" stroke="#000"/><path d="M7 4H12M7 6H12M6 8H11M6 10H11M1 2H4M1 5H4M1 8H4" stroke="#44a"/><path d="M3 10 6 13 3 16 0 13Z" fill="#d02"/></svg><button>sim</button><button class="x" aria-label="Close sim">✕</button></div>
  <div class="tab w204"><svg viewBox="0 0 16 16"><path d="M0 0H16V16H0Z"/><circle cx="8" cy="8" r="7.500" fill="#e0b020"/><path d="M9 1Q14 1 15 6L11 7Z" fill="#28a0e0"/><path d="M4 3 3 8Q4 10 7 8L8 3" fill="none" stroke="#000" stroke-width="1.600"/><path d="M13 9H9L8 15H12M8.500 12H12" fill="none" stroke="#000" stroke-width="1.400"/></svg><button>tb_sdr_controller.v</button><button class="x" aria-label="Close tb_sdr_controller.v">✕</button></div>
  <span class="more"><button aria-label="Scroll tabs left" disabled><svg viewBox="0 0 8 12"><path d="M7 0V12M5 2V10M3 4V8M1 5V7" stroke="#222" stroke-width="1.500" stroke-dasharray="1 1"/></svg></button><button aria-label="Scroll tabs right" disabled><svg viewBox="0 0 8 12"><path d="M1 0V12M3 2V10M5 4V8M7 5V7" stroke="#222" stroke-width="1.500" stroke-dasharray="1 1"/></svg></button></span>
</div>
<script src="wave.js"></script>
</body>
</html>
```
FILE: styles.css
```css
* { box-sizing: border-box; }
html, body { height: 100%; margin: 0; }
body {
  display: flex; flex-direction: column; overflow: hidden;
  background: #efefef; color: #1c1c28;
  font: 16px/20px "DejaVu Sans Condensed", "Noto Sans", sans-serif;
}
button { margin: 0; padding: 0; border: 0; background: none; font: inherit; color: inherit; }
svg { display: block; flex: none; }
.sprite { position: absolute; width: 0; height: 0; }

.strip { flex: none; height: 8px; background: linear-gradient(#ececec, #ececec) 92% 0 / 69px 4px no-repeat, #fff; border-bottom: 1px solid #c4c4c4; }
.menu { flex: none; display: flex; gap: 23px; height: 30px; padding: 0 2px; background: #fff; border-bottom: 3px solid #ececec; box-shadow: inset 0 -1px #ddd; font: 18px/26px "Noto Sans", "Open Sans", sans-serif; color: #222; }
.menu u { text-underline-offset: 3px; }

.row { flex: none; display: flex; gap: 2px; height: 48px; }
.menu + .row { border-top: 1px solid #909090; }
.row.last { padding-left: 285px; }
.bar { position: relative; display: flex; gap: 1px; padding: 6px 8px 4px 18px; border: solid; border-width: 1px 2px 2px 0; border-color: #fff #858585 #858585 #fff; }
.bar::before { content: ""; position: absolute; left: 3px; top: 2px; bottom: 2px; width: 5px; border-right: 2px solid #8c8c8c; border-bottom: 1px solid #8c8c8c; border-left: 1px solid #fff; }
.bar.first { padding-left: 13px; padding-right: 6px; }
.bar.first::before { content: none; }
.bar.tools { padding-right: 1px; }
.tb { width: 32px; height: 30px; display: flex; align-items: center; justify-content: center; }
.tb svg, .box svg { width: 24px; height: 24px; }
.caret { width: 12px; height: 32px; display: flex; align-items: center; justify-content: center; }
.caret::before { content: ""; border: solid transparent; border-width: 5px 5px 0; border-top-color: #000; }
.sep { width: 16px; margin: 4px 0 8px; background: linear-gradient(#444 50%, transparent 50%) center / 1px 3px repeat-y; }
.box { width: 30px; height: 30px; margin: 2px 4px 0; display: flex; align-items: center; justify-content: center; border: 2px solid; border-color: #fafafa #8c8c8c #8c8c8c #fafafa; font: bold 11px/14px "Liberation Serif", serif; color: #666; }
.box.on { background: #fff; border-color: #999 #f4f4f4 #f4f4f4 #999; }
.dot { width: 20px; height: 20px; border: 2px dotted #444; line-height: 16px; }
.dis { opacity: .8; }
.lbl { align-self: flex-start; padding-top: 3px; }
.bar .lbl { margin: 1px 7px 0 0; }
.field { height: 28px; border: 2px solid; border-color: #8e8e8e #fbfbfb #fbfbfb #8e8e8e; border-radius: 0; background: #fff; font: 17px/22px "Liberation Mono", monospace; color: #3c3c3c; padding: 0 4px; appearance: none; }
.help { width: 111px; margin-right: 6px; }
.run { width: 88px; margin: 1px 1px 0 3px; text-align: right; padding: 0 2px; }
.spin { display: flex; flex-direction: column; width: 20px; height: 27px; margin: 1px 6px 0 0; }
.spin button { flex: 1; display: grid; place-items: center; border: 1px solid; border-color: #fff #888 #888 #fff; }
.spin svg { width: 11px; height: 7px; }
.combo-bar { gap: 0; }
.bar.combo-bar { padding-left: 10px; }
.combo-bar .lbl { margin-left: 8px; margin-right: 7px; }
.bar.combo-bar.off { color: #808080; padding-left: 18px; padding-right: 8px; }
.combo-bar.off .lbl { margin-left: 4px; }
.layout { width: 184px; background: #efefef; margin-top: 2px; }
.cols { width: 320px; background: #efefef; margin-top: 2px; color: #808080; opacity: 1; }
.drop { width: 25px; height: 26px; margin: 2px 5px 0 6px; display: grid; place-items: center; border: 2px solid; border-color: #fff #888 #888 #fff; }
.drop svg { width: 20px; height: 11px; }
.last .search-lbl { margin: 0 6px 0 8px; }
.search { width: 174px; margin-top: 1px; }
.last .drop { margin-top: 1px; }
.pair { display: flex; }
.pair .tb { width: 27px; }

.title { flex: none; display: flex; align-items: center; gap: 5px; height: 32px; margin-top: 3px; padding-right: 7px; background: #9ab4d2; border: solid; border-width: 2px 0 3px; border-color: #999 #fff #e4e4e4; box-shadow: inset 0 1px #e8f0f8; }
.title h1 { margin: 0 4px 0 0; font-size: 17px; font-weight: 400; }
.ticon { width: 21px; height: 24px; }
.rails { flex: 1; height: 14px; background: linear-gradient(#c8ecf8 2px, #222 2px 4px, transparent 4px 7px, #c8ecf8 7px 9px, #222 9px 11px, transparent 11px); }
.grip { width: 28px; height: 12px; background: radial-gradient(#222 1px, transparent 1px) 0 0 / 5px 4px, radial-gradient(#fff 1px, transparent 1px) 2px 2px / 5px 4px; }
.title button { width: 16px; height: 17px; display: grid; place-items: center; background: #efefef; border: 1px solid; border-color: #fff #777 #777 #fff; }
.title svg { height: 12px; }
.title .ticon { height: 22px; }

.wave { flex: 1; min-height: 0; display: grid; grid-template-columns: 236px 109px 1fr 25px; grid-template-rows: 27px 1fr 59px 28px; gap: 4px; padding: 0 7px 0 0; background: #fdfdfd; box-shadow: inset -3px 0 #ddd; }
.wave > * { min-width: 0; min-height: 0; box-shadow: 0 0 0 1px #b4b4b4; }
.gray { background: #808080; color: #ececec; overflow: hidden; }
.black { background: #000; }
.plot { width: 100%; height: 100%; overflow: hidden; }
.head { display: flex; align-items: center; padding-left: 10px; }
.head svg { width: 26px; height: 26px; }
.head .caret { height: 20px; margin-left: 3px; }
.msgs { justify-content: flex-end; padding-right: 8px; }
.wave > .names { box-shadow: none; }
.names { margin-left: 10px; background: #808080; color: #ececec; }
.names, .values { padding-top: 4px; }
.values { font-size: 15px; }
.signals { display: grid; grid-template-rows: repeat(16, 1fr); height: 408px; margin: 0; padding: 0; list-style: none; }
.signals li { display: flex; align-items: center; padding-left: 30px; white-space: pre; gap: 7px; }
.signals .bus { padding-left: 8px; gap: 0; }
.bus svg { margin-right: 7px; }
.bus .wire { width: 7px; height: 1px; background: #ddd; }
.plus { width: 15px; height: 15px; background: linear-gradient(#000, #000) center / 9px 2px no-repeat, linear-gradient(#000, #000) center / 2px 9px no-repeat, linear-gradient(#fff, #c8d4f0); }
.signals svg { width: 22px; height: 22px; }
.signals .sel { background: #fff; color: #1c1c28; }
.values .signals li { padding-left: 3px; }
.end { display: flex; align-items: center; height: 10px; margin: -5px 6px 0 3px; }
.end svg { width: 6px; height: 10px; }
.end hr { flex: 1; margin: 0; border: 0; height: 2px; background: #222; }
.foot { display: flex; flex-direction: column; }
.foot > div { display: flex; align-items: center; }
.foot svg { width: 20px; height: 20px; }
.now { flex: 34; padding: 0 12px 2px 8px; }
.now span, .cur span { flex: 1; text-align: right; }
.cur { flex: 25; padding-left: 10px; }
.cur span { align-self: stretch; padding: 2px 12px 0 0; background: #fff; color: #1c1c28; }
.times { align-items: flex-end; }
.times > div { min-width: 100%; }
.times .now, .times .cur { padding-left: 0; justify-content: flex-end; }
.times .cur { background: #fff; }
.times span { white-space: nowrap; flex: 1 0 auto; }

.vscroll { display: flex; flex-direction: column; padding: 2px 2px 3px 3px; background: #efefef; }
.vscroll button, .hs button { background: #efefef; border: 2px solid; border-color: #fff #999 #999 #fff; display: grid; place-items: center; }
.vscroll button { height: 22px; }
.vscroll svg { width: 10px; height: 6px; }
.vtrack { flex: 1; display: flex; flex-direction: column; border: solid #999; border-width: 1px 2px 1px 0; margin: 2px 0; }
.vtrack::before { content: ""; flex: 41; }
.vtrack::after { content: ""; flex: 59; }
.vtrack i { height: 24px; background: #fff; }
.hs { display: flex; padding: 1px 2px; }
.hs button { width: 24px; padding: 0; }
.hs svg { width: 7px; height: 11px; fill: #999; }
.hs i { flex: 1; background: #f6f6f6; }
.hs.inset { padding-left: 10px; }
.wave > .big { background: #c8c8c8; padding: 2px 4px; }
.big button { width: 21px; }
.big svg { fill: #000; }
.big i { display: flex; background: #c8c8c8; }
.big i::before { content: ""; flex: 1338; }
.big i::after { content: ""; flex: 106; }
.big b { width: 31px; border: 2px solid; border-color: #fff #999 #999 #fff; background: linear-gradient(90deg, transparent 4px, #fc2 4px 6px, transparent 6px), #efefef; }

.tabs { flex: none; display: flex; height: 27px; border-top: 6px solid #dcdcdc; box-shadow: inset 0 2px #222; overflow: hidden; }
.tab { display: flex; align-items: flex-start; gap: 5px; padding: 2px 6px 0 8px; background: #cccccc; border: solid #222; border-width: 2px 2px 0 0; color: #333; white-space: nowrap; }
.tab svg { width: 24px; height: 24px; }
.tab button { line-height: 24px; }
.tab .x { margin-left: auto; color: #999; font-weight: bold; }
.active { background: #efefef; padding-left: 0; border-top-color: #efefef; }
.w100 { flex: 0 0 101px; }
.w122 { flex: 0 0 122px; }
.w136 { flex: 0 0 136px; }
.w117 { flex: 0 0 117px; }
.w116 { flex: 0 0 116px; }
.w152 { flex: 0 0 152px; }
.w88 { flex: 0 0 88px; }
.w204 { flex: 0 0 204px; }
.more { margin-left: auto; display: flex; gap: 2px; padding: 0 1px; background: #efefef; }
.more button { width: 15px; height: 26px; display: grid; place-items: center; border: 1px solid; border-color: #fff #888 #888 #fff; }
.more svg { width: 8px; height: 12px; }

.grid { stroke: #6e6e6e; }
.sig { fill: none; stroke: #00dc00; }
.bussig { fill: none; stroke: #88d888; }
.unk { fill: none; stroke: #f00; }
.hiz { fill: none; stroke: #0000d0; }
.val { fill: #ececec; font-size: 15px; }
.tick { fill: none; stroke: #00dc00; }
.time { fill: #00dc00; font-size: 15px; text-anchor: middle; }
.base { stroke: #808080; }
.cursor { fill: #ffd000; mix-blend-mode: difference; }
.tag { fill: #000; stroke: #ffd000; stroke-width: 2; }
.tagtext { fill: #ffd000; font-size: 16px; text-anchor: middle; }
```
FILE: wave.js
```js
// Signals in display order. Columns are raster units of 1.5px from the left edge of the plot.
const signals = [
  { name: 'ref_clk', value: "1'h0", period: 20 },
  { name: 'global_reset', value: "1'h0", edges: [] },
  { name: 'local_wdata', value: "32'h00000000", bus: [[4, "32'h00000000"], [382, "32'h22221111"], [577, "32'h44443333"]] },
  { name: 'local_rdata', value: "32'hxxxxxxxx", flat: 'unk', plus: true },
  { name: 'local_write', value: "1'h0", edges: [381, 384, 576, 583] },
  { name: 'local_read', value: "1'h0", edges: [660, 664, 745, 748] },
  { name: 'local_ready', value: "1'hz", flat: 'hiz' },
  { name: 'local_addr', value: "25'h0000000", bus: [[4, "25'h0000000"], [381, "25'h0001000"], [576, "25'h0002000"], [660, "25'h0001000"], [745, "25'h0002000"]] },
  { name: 'local_rddatavalid', value: "1'h0", edges: [702, 750, 787], selected: true },
  { name: 'sdr_clk', value: "1'h0", period: 10 },
  { name: 'sdr_dq', value: "16'h0000", bus: [[4, "16'h0000"], [397], [399], [402, "16'h2222"], [591], [593], [597, "16'h4444"], [686, 'x'], [688, 'x'], [690, 'x'], [692, "16'h4444"], [769, 'x'], [771, 'x'], [774, "16'h4444"]] },
  { name: 'sdr_dqm', value: "2'h0", bus: [[4, "2'h0"]] },
  { name: 'sdr_bus', value: "20'h72001", bus: [[4, "20'h72001"], [386], [390], [393], [397], [399], [401], [409, "20'h72001"], [581], [586], [588], [592], [595], [598], [604, "20'h72001"], [665], [669], [671], [674], [677], [682, "20'h72001"], [755], [757], [760], [763], [766, "20'h72001"]] },
  { name: 'monitor', value: "24'aNOP", bus: [[4, "24'aNOP"], [386], [390], [393], [397], [401], [409, "24'aNOP"], [581], [586], [589], [593], [597], [604, "24'aNOP"], [669], [673], [677], [682, "24'aNOP"], [755], [758], [762], [766, "24'aNOP"]] },
  { name: 'clk', value: "1'h0", period: 10, phase: 3 },
  { name: '\\RD_FSM|rdata', value: "32'h00000000", bus: [[4, "32'h00000000"], [693], [698, "32'h44444444"]] }
];
const UNIT = 1.5, START = 4, ROW = 17;
const column = t => 306 + (t - 120000) * 0.36827;

document.getElementById('names').innerHTML = signals.map(s => {
  const gem = '<svg><use href="#gem"/></svg>';
  const sel = s.selected ? ' sel' : '';
  return s.bus || s.plus
    ? `<li class="bus${sel}"><button class="plus" aria-label="Expand ${s.name}"></button><span class="wire"></span>${gem}<span>${s.name}</span></li>`
    : `<li class="${sel}">${gem}<span>${s.name}</span></li>`;
}).join('');
document.getElementById('values').innerHTML = signals.map(s => `<li class="${s.selected ? 'sel' : ''}">${s.value}</li>`).join('');

function level(edges, hi, lo, end) {
  let up = false, d = `M${START} ${lo}`;
  for (const e of edges) {
    up = !up;
    d += `H${e + 0.5}V${up ? hi : lo}`;
  }
  return `<path class="sig" d="${d}H${end}"/>`;
}

function clock(s, hi, lo, end) {
  const edges = [];
  const first = 119140 + s.period / 2 + (s.phase || 0);
  for (let t = first; column(t) < end; t += s.period) {
    const a = Math.round(column(t)), b = Math.round(column(t + s.period / 2));
    if (b > START && b < end) edges.push(Math.max(a, START), b);
  }
  return level(edges, hi, lo, end);
}

const labelsOf = (s, lo) => s.bus
  .map(([at, text], i) => text && text !== 'x'
    ? `<text class="val" x="${(at + (i ? 5 : 5)) * UNIT}" y="${(lo - 2) * UNIT}">${text}</text>` : '')
  .join('');

function busPath(s, hi, lo, end) {
  let out = '';
  const m = (hi + lo) / 2;
  s.bus.forEach(([at, text], i) => {
    const x = at + 0.5;
    const more = i + 1 < s.bus.length;
    const next = more ? s.bus[i + 1][0] + 0.5 : end;
    const open = i ? `M${x} ${m - 1}L${x + 1} ${hi + 3}V${hi}` : `M${START} ${hi}`;
    const openLow = i ? `M${x} ${m + 1}L${x + 1} ${lo - 3}V${lo}` : `M${START} ${lo}`;
    const right = more ? Math.max(next - 1, x + 1) : end;
    const close = more ? `H${right}V${hi + 3}L${next} ${m - 1}V${m + 1}` : `H${right}`;
    const closeLow = more ? `H${right}V${lo - 3}L${next} ${m + 1}` : `H${right}`;
    out += `<path class="${text === 'x' ? 'unk' : 'bussig'}" d="${open}${close}${openLow}${closeLow}"/>`;
  });
  return out;
}

function draw() {
  const plot = document.getElementById('plot');
  const width = plot.clientWidth, height = plot.clientHeight;
  const end = (width - 5) / UNIT;
  let body = '', texts = '';
  for (let t = 119200; column(t) < end; t += 200) {
    body += `<path class="grid" d="M${Math.round(column(t)) + 0.5} 0V${height}"/>`;
  }
  signals.forEach((s, i) => {
    const hi = i * ROW + 5, lo = i * ROW + 17;
    if (s.period) body += clock(s, hi, lo, end);
    else if (s.flat) body += `<path class="${s.flat}" d="M${START} ${lo - 6}H${end}"/>`;
    else if (s.bus) {
      body += busPath(s, hi, lo, end);
      texts += labelsOf(s, lo);
    } else body += level(s.edges, hi, lo, end);
  });
  const cur = Math.round(column(119681.456)) - 0.5;
  const bar = h => `<rect class="cursor" x="${cur}" y="0" width="3" height="${h}"/>`;
  plot.innerHTML = `<g transform="scale(${UNIT})">${body}${bar(height)}</g>${texts}`;
  document.getElementById('top').innerHTML = `<g transform="scale(${UNIT})">${bar(20)}</g>`;

  let ticks = '', labels = '';
  for (let t = 119200; column(t) < end; t += 50) {
    const x = Math.round(column(t)) + 0.5;
    ticks += t % 250 ? `M${x} 3V8` : `M${x} 0V8`;
    if (t % 500 === 0) labels += `<text class="time" x="${x * UNIT}" y="31">${t} ns</text>`;
  }
  const mid = (cur + 1.5) * UNIT;
  document.getElementById('ruler').innerHTML =
    `<g transform="scale(${UNIT})"><path class="tick" d="${ticks}"/><path class="base" d="M${START} 22.5H${end}"/>${bar(23)}</g>` +
    labels +
    `<rect class="tag" x="${mid - 57}" y="36" width="114" height="22"/><text class="tagtext" x="${mid}" y="54">119681.456 ns</text>`;
}
draw();
window.addEventListener('resize', draw);
```
